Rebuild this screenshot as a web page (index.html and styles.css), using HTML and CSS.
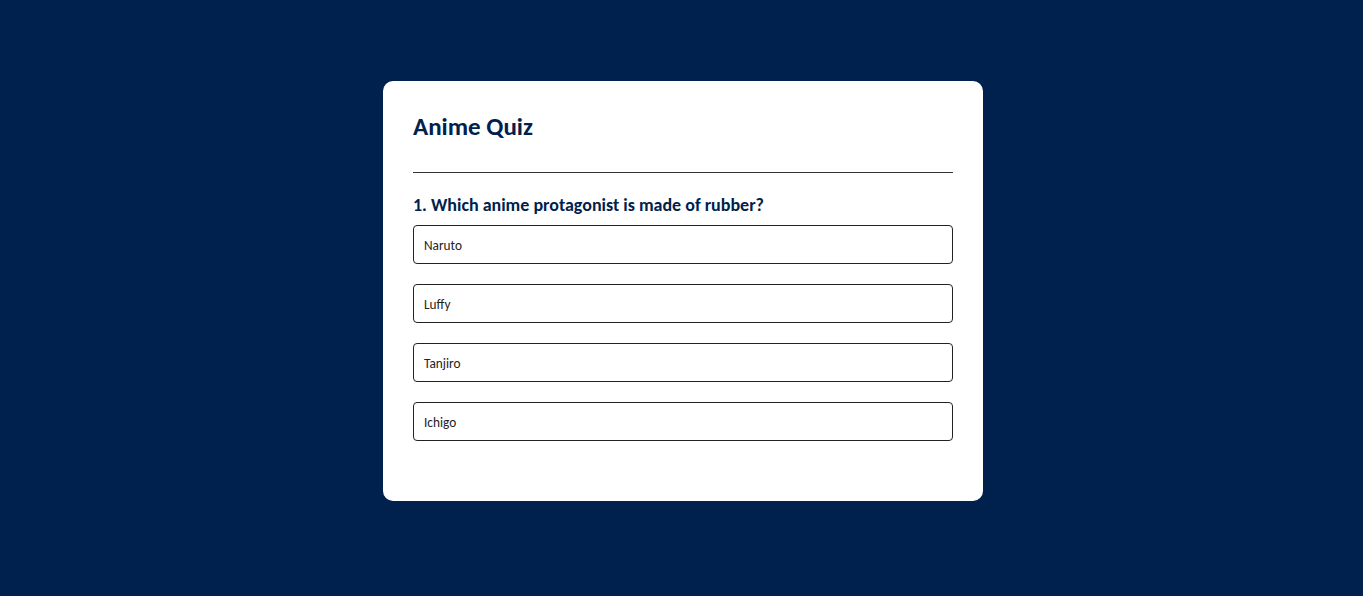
FILE: index.html
```html
<!DOCTYPE html>
<html lang="en">
<head>
<meta charset="utf-8">
<title>Anime Quiz</title>
<link rel="stylesheet" href="styles.css">
</head>
<body>
<main class="page">
  <section class="card">
    <h1 class="title">Anime Quiz</h1>
    <hr class="divider">
    <h2 class="question">1. Which anime protagonist is made of rubber?</h2>
    <ul class="options">
      <li class="option">Naruto</li>
      <li class="option">Luffy</li>
      <li class="option">Tanjiro</li>
      <li class="option">Ichigo</li>
    </ul>
  </section>
</main>
</body>
</html>
```

FILE: styles.css
```css
* { box-sizing: border-box; }
html, body {
  margin: 0;
  padding: 0;
  background: #00214d;
  font-family: Calibri, Carlito, "Open Sans", sans-serif;
}
.page {
  display: flex;
  justify-content: center;
  padding: 81px 0 0 3px;
  min-height: 596px;
}
.card {
  width: 600px;
  height: 420px;
  background: #ffffff;
  border-radius: 10px;
  padding: 30px;
}
.title {
  margin: 0;
  font-size: 25px;
  line-height: 32px;
  font-weight: 700;
  color: #00214d;
}
.divider {
  margin: 29px 0 0 0;
  border: 0;
  border-top: 1px solid #333333;
  height: 0;
}
.question {
  margin: 22px 0 0 0;
  font-size: 18px;
  line-height: 20px;
  font-weight: 700;
  color: #00214d;
}
.options {
  list-style: none;
  margin: 10px 0 0 0;
  padding: 0;
  display: flex;
  flex-direction: column;
  gap: 20px;
}
.option {
  height: 39px;
  border: 1px solid #222222;
  border-radius: 4px;
  padding: 1px 10px 0 10px;
  display: flex;
  align-items: center;
  font-size: 13.3px;
  color: #222222;
}
```
